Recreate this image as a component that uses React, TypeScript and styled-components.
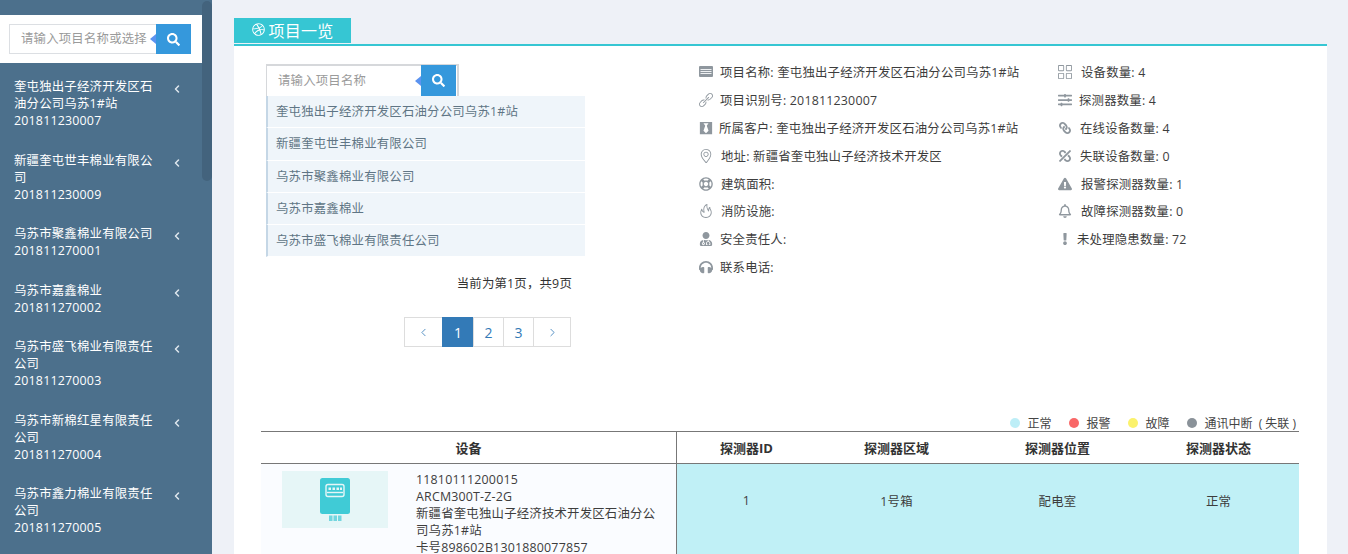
import React from 'react';
import styled, { createGlobalStyle } from 'styled-components';
import {
  FaBlackTie,
  FaDribbble,
  FaExclamation,
  FaExclamationTriangle,
  FaHeadphones,
  FaLink,
  FaRegBell,
  FaRegLifeRing,
  FaSearch,
  FaSlidersH,
  FaUnlink,
  FaUserMd,
} from 'react-icons/fa';
import { SlFire, SlGrid, SlLink, SlLocationPin } from 'react-icons/sl';
import { ChevronLeft, ChevronRight } from 'lucide-react';

const FONT = '"Open Sans", "Noto Sans CJK SC", sans-serif';

const GlobalStyle = createGlobalStyle`
  html, body {
    margin: 0;
    height: 100%;
    overflow: hidden;
    background: #eef1f7;
    font-family: ${FONT};
    font-size: 12.4px;
    letter-spacing: 0.2px;
    color: #333;
  }
  #root { height: 100%; }
  * { box-sizing: border-box; }
`;

const Page = styled.div`
  display: flex;
  width: 1348px;
  height: 554px;
  overflow: hidden;
`;

const Sidebar = styled.aside`
  position: relative;
  flex: 0 0 212px;
  background: #4c708c;
  color: #fff;
  overflow: hidden;
`;

const Scrollbar = styled.div`
  position: absolute;
  top: 1px;
  right: 0;
  width: 10px;
  height: 180px;
  border-radius: 5px;
  background: #43637d;
`;

const SideSearch = styled.div`
  margin-top: 15px;
  height: 48px;
  width: 202px;
  padding: 9px 11px 9px 9px;
  background: #fff;
`;

const SearchBox = styled.div<{ $framed?: boolean }>`
  position: relative;
  display: flex;
  height: ${p => (p.$framed ? '32px' : '30px')};
  width: ${p => (p.$framed ? '193px' : '182px')};
  border: 1px solid #dcdfe3;
  border-width: ${p => (p.$framed ? '2px 2px 0 1px' : '1px')};
  ${p => p.$framed && 'border-color: #d6d8db;'}
  background: #fff;
`;

const SearchInput = styled.div<{ $framed?: boolean }>`
  flex: 1;
  padding-left: 11px;
  line-height: ${p => (p.$framed ? '30px' : '28px')};
  color: #9b9b9b;
  white-space: nowrap;
  overflow: hidden;
`;

const SearchButton = styled.div<{ $framed?: boolean }>`
  position: relative;
  display: flex;
  flex: 0 0 35px;
  align-items: center;
  justify-content: center;
  height: ${p => (p.$framed ? '31px' : '30px')};
  margin: ${p => (p.$framed ? '-1px 1px 0 0' : '-1px -1px 0 0')};
  background: #3598dc;
  color: #fff;
  font-size: 13px;

  &::before {
    content: '';
    position: absolute;
    left: -6px;
    top: 50%;
    margin-top: -5px;
    border-style: solid;
    border-width: 5px 6px 5px 0;
    border-color: transparent #5b93f0 transparent transparent;
  }
`;

const SideList = styled.ul`
  list-style: none;
  margin: 0;
  padding: 6px 0 0;
`;

const SideItem = styled.li`
  display: flex;
  align-items: flex-start;
  padding: 9.4px 0 13.1px 14px;
  line-height: 17px;
`;

const SideText = styled.div`
  width: 141px;
  word-break: break-all;
`;

const SideArrow = styled.span`
  display: flex;
  margin: 5px 0 0 16px;
  color: #dfe7ee;
`;

const Main = styled.main`
  flex: 0 0 1093px;
  margin-left: 22px;
  padding-top: 18px;
`;

const TabBar = styled.div`
  height: 28px;
  border-bottom: 2px solid #36c6d3;
`;

const Tab = styled.div`
  display: flex;
  align-items: center;
  justify-content: center;
  gap: 4px;
  width: 117px;
  height: 25px;
  padding-bottom: 2px;
  background: #36c6d3;
  color: #fff;
  font-size: 16px;
  letter-spacing: 0.2px;
`;

const Panel = styled.section`
  height: 508px;
  padding: 12px 28px 0 27px;
  background: #fff;
`;

const TopRow = styled.div`
  display: flex;
  height: 356px;
`;

const LeftColumn = styled.div`
  flex: 0 0 438px;
  padding: 6px 0 0 5px;
`;

const ProjectList = styled.ul`
  list-style: none;
  margin: 0;
  width: 319px;
  padding: 0;
`;

const ProjectItem = styled.li`
  height: 32.3px;
  line-height: 32px;
  padding-left: 8px;
  border-left: 2px solid #c5d7e6;
  border-bottom: 1px solid #fff;
  background: #eff5fa;
  color: #5f7585;
  white-space: nowrap;
`;

const PageNote = styled.div`
  width: 306px;
  margin-top: 18px;
  text-align: right;
  line-height: 18px;
`;

const Pager = styled.div`
  display: flex;
  width: 167px;
  height: 30px;
  margin: 24px 0 0 139px;
`;

const PagerCell = styled.div<{ $active?: boolean; $width: number }>`
  display: flex;
  align-items: center;
  justify-content: center;
  width: ${p => p.$width}px;
  margin-left: -1px;
  border: 1px solid ${p => (p.$active ? '#337ab7' : '#ddd')};
  background: ${p => (p.$active ? '#337ab7' : '#fff')};
  color: ${p => (p.$active ? '#fff' : '#337ab7')};
  font-size: 14px;
  letter-spacing: 0;
`;

const InfoColumn = styled.div<{ $width: number }>`
  flex: 0 0 ${p => p.$width}px;
`;

const InfoRow = styled.div`
  display: flex;
  align-items: center;
  height: 27.9px;
  white-space: nowrap;
  color: #3d3d3d;
`;

const InfoIcon = styled.span<{ $gap: number; $flip?: boolean }>`
  display: flex;
  justify-content: center;
  flex: 0 0 14px;
  margin-right: ${p => p.$gap}px;
  color: #8f979e;
  font-size: 14px;
  ${p => p.$flip && 'transform: scaleX(-1);'}
`;

const Legend = styled.div`
  display: flex;
  justify-content: flex-end;
  align-items: center;
  gap: 18px;
  height: 17px;
  padding-right: 3px;
  font-size: 12px;
  letter-spacing: 0;
  color: #444;
`;

const LegendItem = styled.div`
  display: flex;
  align-items: center;
  gap: 7px;
  white-space: pre;
`;

const Dot = styled.i<{ $color: string }>`
  width: 10px;
  height: 10px;
  border-radius: 50%;
  background: ${p => p.$color};
`;

const Table = styled.div`
  display: grid;
  grid-template-columns: 416px 139px 161px 161px 161px;
  width: 1038px;
  border-top: 1px solid #777;
`;

const HeadCell = styled.div<{ $split?: boolean }>`
  display: flex;
  align-items: center;
  justify-content: center;
  height: 32px;
  border-bottom: 1px solid #777;
  ${p => p.$split && 'border-right: 1px solid #777;'}
  font-weight: 700;
  font-size: 13px;
  letter-spacing: 0;
  color: #333;
`;

const DeviceCell = styled.div`
  display: flex;
  height: 95px;
  padding: 7px 20px 0 21px;
  border-right: 1px solid #777;
  background: #fafcff;
`;

const DeviceThumb = styled.div`
  display: flex;
  flex: 0 0 106px;
  align-items: center;
  justify-content: center;
  height: 57px;
  background: #e6f6f7;
`;

const DeviceText = styled.div`
  width: 245px;
  margin-left: 28px;
  line-height: 17px;
  word-break: break-all;
  color: #3d3d3d;
`;

const DataCell = styled.div`
  display: flex;
  justify-content: center;
  padding-top: 28px;
  background: #c0f0f6;
  color: #3d3d3d;
`;

const sideItems = [
  ['奎屯独出子经济开发区石油分公司乌苏1#站', '201811230007'],
  ['新疆奎屯世丰棉业有限公司', '201811230009'],
  ['乌苏市聚鑫棉业有限公司', '201811270001'],
  ['乌苏市嘉鑫棉业', '201811270002'],
  ['乌苏市盛飞棉业有限责任公司', '201811270003'],
  ['乌苏市新棉红星有限责任公司', '201811270004'],
  ['乌苏市鑫力棉业有限责任公司', '201811270005'],
];

const projects = [
  '奎屯独出子经济开发区石油分公司乌苏1#站',
  '新疆奎屯世丰棉业有限公司',
  '乌苏市聚鑫棉业有限公司',
  '乌苏市嘉鑫棉业',
  '乌苏市盛飞棉业有限责任公司',
];

const CardIcon: React.FC = () => (
  <svg width="14" height="11" viewBox="0 0 14 11">
    <rect width="14" height="11" rx="1" fill="#8f979e" />
    <path d="M1.5 3h11v1h-11zM1.5 5h11v1h-11zM1.5 7h11v1h-11z" fill="#eef0f2" />
  </svg>
);

const infoLeft = [
  { icon: <CardIcon />, gap: 7, text: '项目名称: 奎屯独出子经济开发区石油分公司乌苏1#站' },
  { icon: <SlLink />, gap: 7, text: '项目识别号: 201811230007' },
  { icon: <FaBlackTie />, gap: 6, text: '所属客户: 奎屯独出子经济开发区石油分公司乌苏1#站' },
  { icon: <SlLocationPin />, gap: 8, text: '地址: 新疆省奎屯独山子经济技术开发区' },
  { icon: <FaRegLifeRing />, gap: 8, text: '建筑面积:' },
  { icon: <SlFire />, gap: 8, text: '消防设施:' },
  { icon: <FaUserMd />, gap: 7, text: '安全责任人:' },
  { icon: <FaHeadphones />, gap: 7, text: '联系电话:' },
];

const infoRight = [
  { icon: <SlGrid />, gap: 9, text: '设备数量: 4' },
  { icon: <FaSlidersH />, gap: 7, text: '探测器数量: 4' },
  { icon: <FaLink size={12} />, gap: 8, flip: true, text: '在线设备数量: 4' },
  { icon: <FaUnlink size={12} />, gap: 8, flip: true, text: '失联设备数量: 0' },
  { icon: <FaExclamationTriangle />, gap: 9, text: '报警探测器数量: 1' },
  { icon: <FaRegBell />, gap: 9, text: '故障探测器数量: 0' },
  { icon: <FaExclamation size={12} />, gap: 5, text: '未处理隐患数量: 72' },
];

const legend = [
  { color: '#bdeef7', label: '正常' },
  { color: '#f96868', label: '报警' },
  { color: '#fbf26c', label: '故障' },
  { color: '#8a9299', label: '通讯中断  ( 失联 )' },
];

const MeterIcon: React.FC = () => (
  <svg width="30" height="43" viewBox="0 0 30 43">
    <rect width="30" height="36" rx="2.5" fill="#40cbd6" />
    <rect x="6" y="6.5" width="18" height="12" rx="2" fill="none" stroke="#e6f6f7" strokeWidth="1.4" />
    <path d="M8.5 9.5h2.5v2.5H8.5zM12.5 9.5H15v2.5h-2.5zM16.5 9.5H19v2.5h-2.5zM20 9.5h2v2.5h-2z" fill="#e6f6f7" />
    <path d="M7 14.5h16" stroke="#e6f6f7" strokeWidth="1.4" />
    <path d="M9 37.5h3.5V43H9zM13.5 37.5H17V43h-3.5zM18 37.5h3.5V43H18z" fill="#72d6df" />
  </svg>
);

const App: React.FC = () => {
  return (
    <Page>
      <GlobalStyle />
      <Sidebar>
        <Scrollbar />
        <SideSearch>
          <SearchBox>
            <SearchInput>请输入项目名称或选择</SearchInput>
            <SearchButton><FaSearch /></SearchButton>
          </SearchBox>
        </SideSearch>
        <SideList>
          {sideItems.map(item => (
            <SideItem key={item[1]}>
              <SideText>{item[0]}<br />{item[1]}</SideText>
              <SideArrow><ChevronLeft size={12} strokeWidth={3} /></SideArrow>
            </SideItem>
          ))}
        </SideList>
      </Sidebar>
      <Main>
        <TabBar>
          <Tab><FaDribbble size={13} />项目一览</Tab>
        </TabBar>
        <Panel>
          <TopRow>
            <LeftColumn>
              <SearchBox $framed>
                <SearchInput $framed>请输入项目名称</SearchInput>
                <SearchButton $framed><FaSearch /></SearchButton>
              </SearchBox>
              <ProjectList>
                {projects.map(name => (
                  <ProjectItem key={name}>{name}</ProjectItem>
                ))}
              </ProjectList>
              <PageNote>当前为第1页，共9页</PageNote>
              <Pager>
                <PagerCell $width={39}><ChevronLeft size={13} strokeWidth={1.5} /></PagerCell>
                <PagerCell $active $width={32}>1</PagerCell>
                <PagerCell $width={31}>2</PagerCell>
                <PagerCell $width={31}>3</PagerCell>
                <PagerCell $width={38}><ChevronRight size={13} strokeWidth={1.5} /></PagerCell>
              </Pager>
            </LeftColumn>
            <InfoColumn $width={359}>
              {infoLeft.map(row => (
                <InfoRow key={row.text}>
                  <InfoIcon $gap={row.gap}>{row.icon}</InfoIcon>
                  {row.text}
                </InfoRow>
              ))}
            </InfoColumn>
            <InfoColumn $width={240}>
              {infoRight.map(row => (
                <InfoRow key={row.text}>
                  <InfoIcon $gap={row.gap} $flip={row.flip}>{row.icon}</InfoIcon>
                  {row.text}
                </InfoRow>
              ))}
            </InfoColumn>
          </TopRow>
          <Legend>
            {legend.map(item => (
              <LegendItem key={item.label}>
                <Dot $color={item.color} />
                {item.label}
              </LegendItem>
            ))}
          </Legend>
          <Table>
            <HeadCell $split>设备</HeadCell>
            <HeadCell>探测器ID</HeadCell>
            <HeadCell>探测器区域</HeadCell>
            <HeadCell>探测器位置</HeadCell>
            <HeadCell>探测器状态</HeadCell>
            <DeviceCell>
              <DeviceThumb><MeterIcon /></DeviceThumb>
              <DeviceText>
                11810111200015<br />
                ARCM300T-Z-2G<br />
                新疆省奎屯独山子经济技术开发区石油分公司乌苏1#站<br />
                卡号898602B1301880077857
              </DeviceText>
            </DeviceCell>
            <DataCell>1</DataCell>
            <DataCell>1号箱</DataCell>
            <DataCell>配电室</DataCell>
            <DataCell>正常</DataCell>
          </Table>
        </Panel>
      </Main>
    </Page>
  );
};

export default App;
